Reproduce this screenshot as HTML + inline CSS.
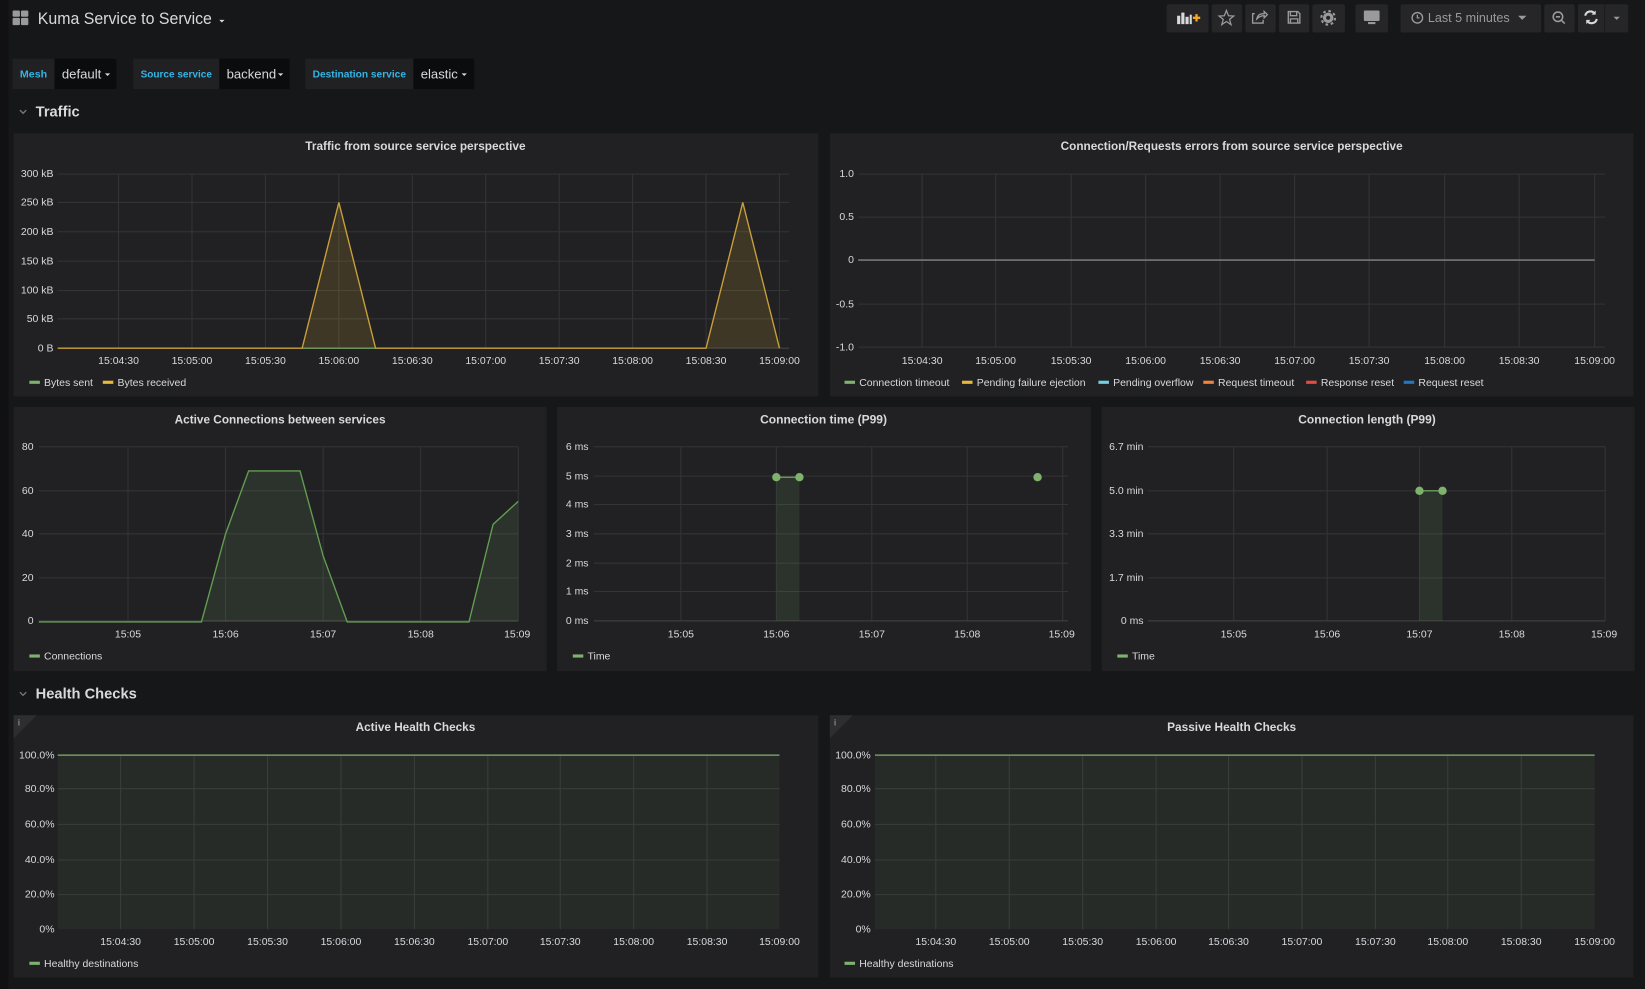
<!DOCTYPE html>
<html><head><meta charset="utf-8"><style>
html,body{margin:0;padding:0;background:#161719;width:1645px;height:989px;overflow:hidden}
#w{position:absolute;left:0;top:0;width:1568px;height:943px;transform:scale(1.04911,1.04878);transform-origin:0 0}
svg{display:block}
text{font-family:"Liberation Sans",sans-serif}
</style></head><body><div id="w">
<svg width="1568" height="943" viewBox="0 0 1568 943" xmlns="http://www.w3.org/2000/svg">
<rect width="1568" height="943" fill="#161719"/>
<rect width="8" height="943" fill="#111113"/>
<!-- top bar -->
<g fill="#9a9a9c"><rect x="12" y="10" width="7" height="6" rx="1"/><rect x="20" y="10" width="7" height="6" rx="1"/><rect x="12" y="17" width="7" height="7" rx="1"/><rect x="20" y="17" width="7" height="7" rx="1"/></g>
<text x="36" y="23" font-size="15.5" fill="#d8d9da" textLength="166" lengthAdjust="spacingAndGlyphs">Kuma Service to Service</text>
<path d="M209 19l5 0-2.5 2.5z" fill="#d8d9da"/>
<g fill="#262628"><rect x="1112" y="4" width="40" height="27" rx="2"/><rect x="1155" y="4" width="29" height="27" rx="2"/><rect x="1187" y="4" width="29" height="27" rx="2"/><rect x="1219" y="4" width="29" height="27" rx="2"/><rect x="1251" y="4" width="31" height="27" rx="2"/><rect x="1292" y="4" width="31" height="27" rx="2"/><rect x="1335" y="4" width="134" height="27" rx="2"/><rect x="1472" y="4" width="29" height="27" rx="2"/><rect x="1504" y="4" width="48" height="27" rx="2"/></g>
<g fill="#d8d9da"><rect x="1122" y="15" width="3" height="8"/><rect x="1126" y="12" width="3" height="11"/><rect x="1130" y="16" width="3" height="7"/><rect x="1134" y="14" width="2" height="9"/></g>
<path d="M1137 17h7M1140.5 13.5v7" stroke="#f5a623" stroke-width="2.2"/>
<path d="M1169 10l2 5 5 .3-4 3.2 1.4 5-4.4-3-4.4 3 1.4-5-4-3.2 5-.3z" fill="none" stroke="#9a9a9c" stroke-width="1.2"/>
<path d="M1196 13h-2v9h10v-3M1198 18c1-4 3-5 7-5v-2l3 3-3 3v-2c-3 0-5 1-7 3z" fill="none" stroke="#9a9a9c" stroke-width="1.3"/>
<path d="M1228 11h9l2 2v9h-11zM1230 11v4h6v-4M1230 22v-4h7v4" fill="none" stroke="#9a9a9c" stroke-width="1.3"/>
<circle cx="1266" cy="17" r="5" fill="#9a9a9c"/><circle cx="1266" cy="17" r="6.5" fill="none" stroke="#9a9a9c" stroke-width="2" stroke-dasharray="2.5 2.6"/><circle cx="1266" cy="17" r="2" fill="#262628"/>
<rect x="1300" y="10" width="15" height="10" rx="1" fill="#9a9a9c"/><rect x="1304" y="21" width="7" height="2" fill="#9a9a9c"/>
<circle cx="1351" cy="17" r="5" fill="none" stroke="#9a9a9c" stroke-width="1.3"/><path d="M1351 14v3h2" stroke="#9a9a9c" stroke-width="1.2" fill="none"/>
<text x="1361" y="21" font-size="12" fill="#9a9a9c">Last 5 minutes</text>
<path d="M1447 15h8l-4 4z" fill="#9a9a9c"/>
<circle cx="1485" cy="16" r="4.5" fill="none" stroke="#9a9a9c" stroke-width="1.5"/><path d="M1488 19l3.5 3.5M1483 16h4" stroke="#9a9a9c" stroke-width="1.5"/>
<path d="M1511 15a5 5 0 0 1 9-2M1522 18a5 5 0 0 1-9 2" fill="none" stroke="#d8d9da" stroke-width="2"/><path d="M1521 10v4h-4z M1512 23v-4h4z" fill="#d8d9da"/>
<rect x="1529" y="4" width="1" height="27" fill="#1b1b1d"/>
<path d="M1538 16h6l-3 3z" fill="#9a9a9c"/>
<!-- variables -->
<rect x="12" y="56" width="40" height="29" fill="#212124"/><rect x="52" y="56" width="59" height="29" fill="#0b0c0e"/>
<text x="19" y="74" font-size="10" font-weight="bold" fill="#33b5e5" textLength="26" lengthAdjust="spacingAndGlyphs">Mesh</text><text x="59" y="75" font-size="12.5" fill="#d8d9da">default</text><path d="M100 70h5l-2.5 2.5z" fill="#d8d9da"/>
<rect x="127" y="56" width="82" height="29" fill="#212124"/><rect x="209" y="56" width="67" height="29" fill="#0b0c0e"/>
<text x="134" y="74" font-size="10" font-weight="bold" fill="#33b5e5" textLength="68" lengthAdjust="spacingAndGlyphs">Source service</text><text x="216" y="75" font-size="12.5" fill="#d8d9da">backend</text><path d="M265 70h5l-2.5 2.5z" fill="#d8d9da"/>
<rect x="291" y="56" width="103" height="29" fill="#212124"/><rect x="394" y="56" width="58" height="29" fill="#0b0c0e"/>
<text x="298" y="74" font-size="10" font-weight="bold" fill="#33b5e5" textLength="89" lengthAdjust="spacingAndGlyphs">Destination service</text><text x="401" y="75" font-size="12.5" fill="#d8d9da">elastic</text><path d="M440 70h5l-2.5 2.5z" fill="#d8d9da"/>
<path d="M19 105l3 3 3-3" stroke="#777" fill="none" stroke-width="1.3"/><text x="34" y="111" font-size="14" font-weight="bold" fill="#d8d9da">Traffic</text>
<path d="M19 660l3 3 3-3" stroke="#777" fill="none" stroke-width="1.3"/><text x="34" y="666" font-size="14" font-weight="bold" fill="#d8d9da">Health Checks</text>
<!-- panels -->
<g fill="#212124"><rect x="13" y="127" width="767" height="251"/><rect x="791" y="127" width="766" height="251"/><rect x="13" y="388" width="508" height="252"/><rect x="531" y="388" width="509" height="252"/><rect x="1050" y="388" width="508" height="252"/><rect x="13" y="682" width="767" height="250"/><rect x="791" y="682" width="766" height="250"/></g>
<g font-size="11.5" font-weight="bold" fill="#d8d9da" text-anchor="middle">
<text x="396" y="143" textLength="210" lengthAdjust="spacingAndGlyphs">Traffic from source service perspective</text>
<text x="1174" y="143" textLength="326" lengthAdjust="spacingAndGlyphs">Connection/Requests errors from source service perspective</text>
<text x="267" y="404" textLength="201" lengthAdjust="spacingAndGlyphs">Active Connections between services</text>
<text x="785" y="404" textLength="121" lengthAdjust="spacingAndGlyphs">Connection time (P99)</text>
<text x="1303" y="404" textLength="131" lengthAdjust="spacingAndGlyphs">Connection length (P99)</text>
<text x="396" y="697" textLength="114" lengthAdjust="spacingAndGlyphs">Active Health Checks</text>
<text x="1174" y="697" textLength="123" lengthAdjust="spacingAndGlyphs">Passive Health Checks</text></g>
<g stroke="#333436" stroke-width="1" fill="none">
<path d="M55 166H752M55 193H752M55 221H752M55 249H752M55 277H752M55 304H752M113 166V332M183 166V332M253 166V332M323 166V332M393 166V332M463 166V332M533 166V332M603 166V332M673 166V332M743 166V332"/>
<path d="M818 166H1530M818 207H1530M818 290H1530M818 331H1530M879 166V331M949 166V331M1021 166V331M1092 166V331M1163 166V331M1234 166V331M1305 166V331M1377 166V331M1448 166V331M1520 166V331"/>
<path d="M37 426H494M37 468H494M37 509H494M37 551H494M122 426V592M215 426V592M308 426V592M401 426V592M494 426V592"/>
<path d="M566 426H1018M566 454H1018M566 481H1018M566 509H1018M566 537H1018M566 564H1018M649 426V592M740 426V592M831 426V592M922 426V592M1013 426V592"/>
<path d="M1094 426H1530M1094 468H1530M1094 509H1530M1094 551H1530M1176 426V592M1265 426V592M1353 426V592M1441 426V592M1530 426V592"/>
</g>
<g stroke="#444" fill="none"><path d="M55 332H752M37 592H494M566 592H1018M1094 592H1530"/></g>
<!-- series -->
<path d="M288 332L323 193L358 332ZM673 332L708 193L743 332Z" fill="rgba(234,184,57,0.15)"/>
<path d="M55 332H288L323 193L358 332H673L708 193L743 332" stroke="#c9a03a" stroke-width="1.3" fill="none"/>
<path d="M288 332H358" stroke="#7eb26d" stroke-width="1"/>
<path d="M818 248H1520" stroke="#777" stroke-width="1.5"/>
<path d="M192 593L215 509L237 449L286 449L308 530L331 593H447L470 500L494 478V593Z" fill="rgba(126,178,109,0.12)"/>
<path d="M37 593H192L215 509L237 449L286 449L308 530L331 593H447L470 500L494 478" stroke="#629e51" stroke-width="1.3" fill="none"/>
<rect x="740" y="455" width="22" height="137" fill="rgba(126,178,109,0.12)"/><path d="M740 455H762" stroke="#7eb26d"/>
<g fill="#7eb26d"><circle cx="740" cy="455" r="4"/><circle cx="762" cy="455" r="4"/><circle cx="989" cy="455" r="4"/><circle cx="1353" cy="468" r="4"/><circle cx="1375" cy="468" r="4"/></g>
<rect x="1353" y="468" width="22" height="124" fill="rgba(126,178,109,0.12)"/><path d="M1353 468H1375" stroke="#7eb26d"/>
<!-- health -->
<rect x="55" y="720" width="688" height="166" fill="#272b27"/><rect x="834" y="720" width="686" height="166" fill="#272b27"/>
<g stroke="#3a3e3a" fill="none">
<path d="M55 752H743M55 786H743M55 820H743M55 853H743M115 720V886M185 720V886M255 720V886M325 720V886M395 720V886M465 720V886M534 720V886M604 720V886M674 720V886"/>
<path d="M834 752H1520M834 786H1520M834 820H1520M834 853H1520M892 720V886M962 720V886M1032 720V886M1102 720V886M1171 720V886M1241 720V886M1311 720V886M1380 720V886M1450 720V886"/></g>
<path d="M55 720H743M834 720H1520" stroke="#7eb26d" stroke-width="1.3"/>
<path d="M13 682h22l-22 22z M791 682h22l-22 22z" fill="#2e2e31"/>
<text x="17" y="692" font-size="9" fill="#aaa">i</text><text x="795" y="692" font-size="9" fill="#aaa">i</text>
<!-- axis labels -->
<g font-size="10" fill="#d8d9da" text-anchor="end">
<text x="51" y="169">300 kB</text><text x="51" y="196">250 kB</text><text x="51" y="224">200 kB</text><text x="51" y="252">150 kB</text><text x="51" y="280">100 kB</text><text x="51" y="307">50 kB</text><text x="51" y="335">0 B</text>
<text x="814" y="169">1.0</text><text x="814" y="210">0.5</text><text x="814" y="251">0</text><text x="814" y="293">-0.5</text><text x="814" y="334">-1.0</text>
<text x="32" y="429">80</text><text x="32" y="471">60</text><text x="32" y="512">40</text><text x="32" y="554">20</text><text x="32" y="595">0</text>
<text x="561" y="429">6 ms</text><text x="561" y="457">5 ms</text><text x="561" y="484">4 ms</text><text x="561" y="512">3 ms</text><text x="561" y="540">2 ms</text><text x="561" y="567">1 ms</text><text x="561" y="595">0 ms</text>
<text x="1090" y="429">6.7 min</text><text x="1090" y="471">5.0 min</text><text x="1090" y="512">3.3 min</text><text x="1090" y="554">1.7 min</text><text x="1090" y="595">0 ms</text>
<text x="52" y="723">100.0%</text><text x="52" y="755">80.0%</text><text x="52" y="789">60.0%</text><text x="52" y="823">40.0%</text><text x="52" y="856">20.0%</text><text x="52" y="889">0%</text>
<text x="830" y="723">100.0%</text><text x="830" y="755">80.0%</text><text x="830" y="789">60.0%</text><text x="830" y="823">40.0%</text><text x="830" y="856">20.0%</text><text x="830" y="889">0%</text>
</g>
<g font-size="10" fill="#d8d9da" text-anchor="middle">
<text x="113" y="347">15:04:30</text><text x="183" y="347">15:05:00</text><text x="253" y="347">15:05:30</text><text x="323" y="347">15:06:00</text><text x="393" y="347">15:06:30</text><text x="463" y="347">15:07:00</text><text x="533" y="347">15:07:30</text><text x="603" y="347">15:08:00</text><text x="673" y="347">15:08:30</text><text x="743" y="347">15:09:00</text>
<text x="879" y="347">15:04:30</text><text x="949" y="347">15:05:00</text><text x="1021" y="347">15:05:30</text><text x="1092" y="347">15:06:00</text><text x="1163" y="347">15:06:30</text><text x="1234" y="347">15:07:00</text><text x="1305" y="347">15:07:30</text><text x="1377" y="347">15:08:00</text><text x="1448" y="347">15:08:30</text><text x="1520" y="347">15:09:00</text>
<text x="122" y="608">15:05</text><text x="215" y="608">15:06</text><text x="308" y="608">15:07</text><text x="401" y="608">15:08</text><text x="493" y="608">15:09</text>
<text x="649" y="608">15:05</text><text x="740" y="608">15:06</text><text x="831" y="608">15:07</text><text x="922" y="608">15:08</text><text x="1012" y="608">15:09</text>
<text x="1176" y="608">15:05</text><text x="1265" y="608">15:06</text><text x="1353" y="608">15:07</text><text x="1441" y="608">15:08</text><text x="1529" y="608">15:09</text>
<text x="115" y="901">15:04:30</text><text x="185" y="901">15:05:00</text><text x="255" y="901">15:05:30</text><text x="325" y="901">15:06:00</text><text x="395" y="901">15:06:30</text><text x="465" y="901">15:07:00</text><text x="534" y="901">15:07:30</text><text x="604" y="901">15:08:00</text><text x="674" y="901">15:08:30</text><text x="743" y="901">15:09:00</text>
<text x="892" y="901">15:04:30</text><text x="962" y="901">15:05:00</text><text x="1032" y="901">15:05:30</text><text x="1102" y="901">15:06:00</text><text x="1171" y="901">15:06:30</text><text x="1241" y="901">15:07:00</text><text x="1311" y="901">15:07:30</text><text x="1380" y="901">15:08:00</text><text x="1450" y="901">15:08:30</text><text x="1520" y="901">15:09:00</text>
</g>
<!-- legends -->
<g font-size="10" fill="#d8d9da">
<rect x="28" y="363" width="10" height="3" fill="#7eb26d"/><text x="42" y="368">Bytes sent</text>
<rect x="98" y="363" width="10" height="3" fill="#eab839"/><text x="112" y="368">Bytes received</text>
<rect x="805" y="363" width="10" height="3" fill="#7eb26d"/><text x="819" y="368">Connection timeout</text>
<rect x="917" y="363" width="10" height="3" fill="#eab839"/><text x="931" y="368">Pending failure ejection</text>
<rect x="1047" y="363" width="10" height="3" fill="#6ed0e0"/><text x="1061" y="368">Pending overflow</text>
<rect x="1147" y="363" width="10" height="3" fill="#ef843c"/><text x="1161" y="368">Request timeout</text>
<rect x="1245" y="363" width="10" height="3" fill="#e24d42"/><text x="1259" y="368">Response reset</text>
<rect x="1338" y="363" width="10" height="3" fill="#1f78c1"/><text x="1352" y="368">Request reset</text>
<rect x="28" y="624" width="10" height="3" fill="#7eb26d"/><text x="42" y="629">Connections</text>
<rect x="546" y="624" width="10" height="3" fill="#7eb26d"/><text x="560" y="629">Time</text>
<rect x="1065" y="624" width="10" height="3" fill="#7eb26d"/><text x="1079" y="629">Time</text>
<rect x="28" y="917" width="10" height="3" fill="#7eb26d"/><text x="42" y="922">Healthy destinations</text>
<rect x="805" y="917" width="10" height="3" fill="#7eb26d"/><text x="819" y="922">Healthy destinations</text>
</g>
</svg></div></body></html>
